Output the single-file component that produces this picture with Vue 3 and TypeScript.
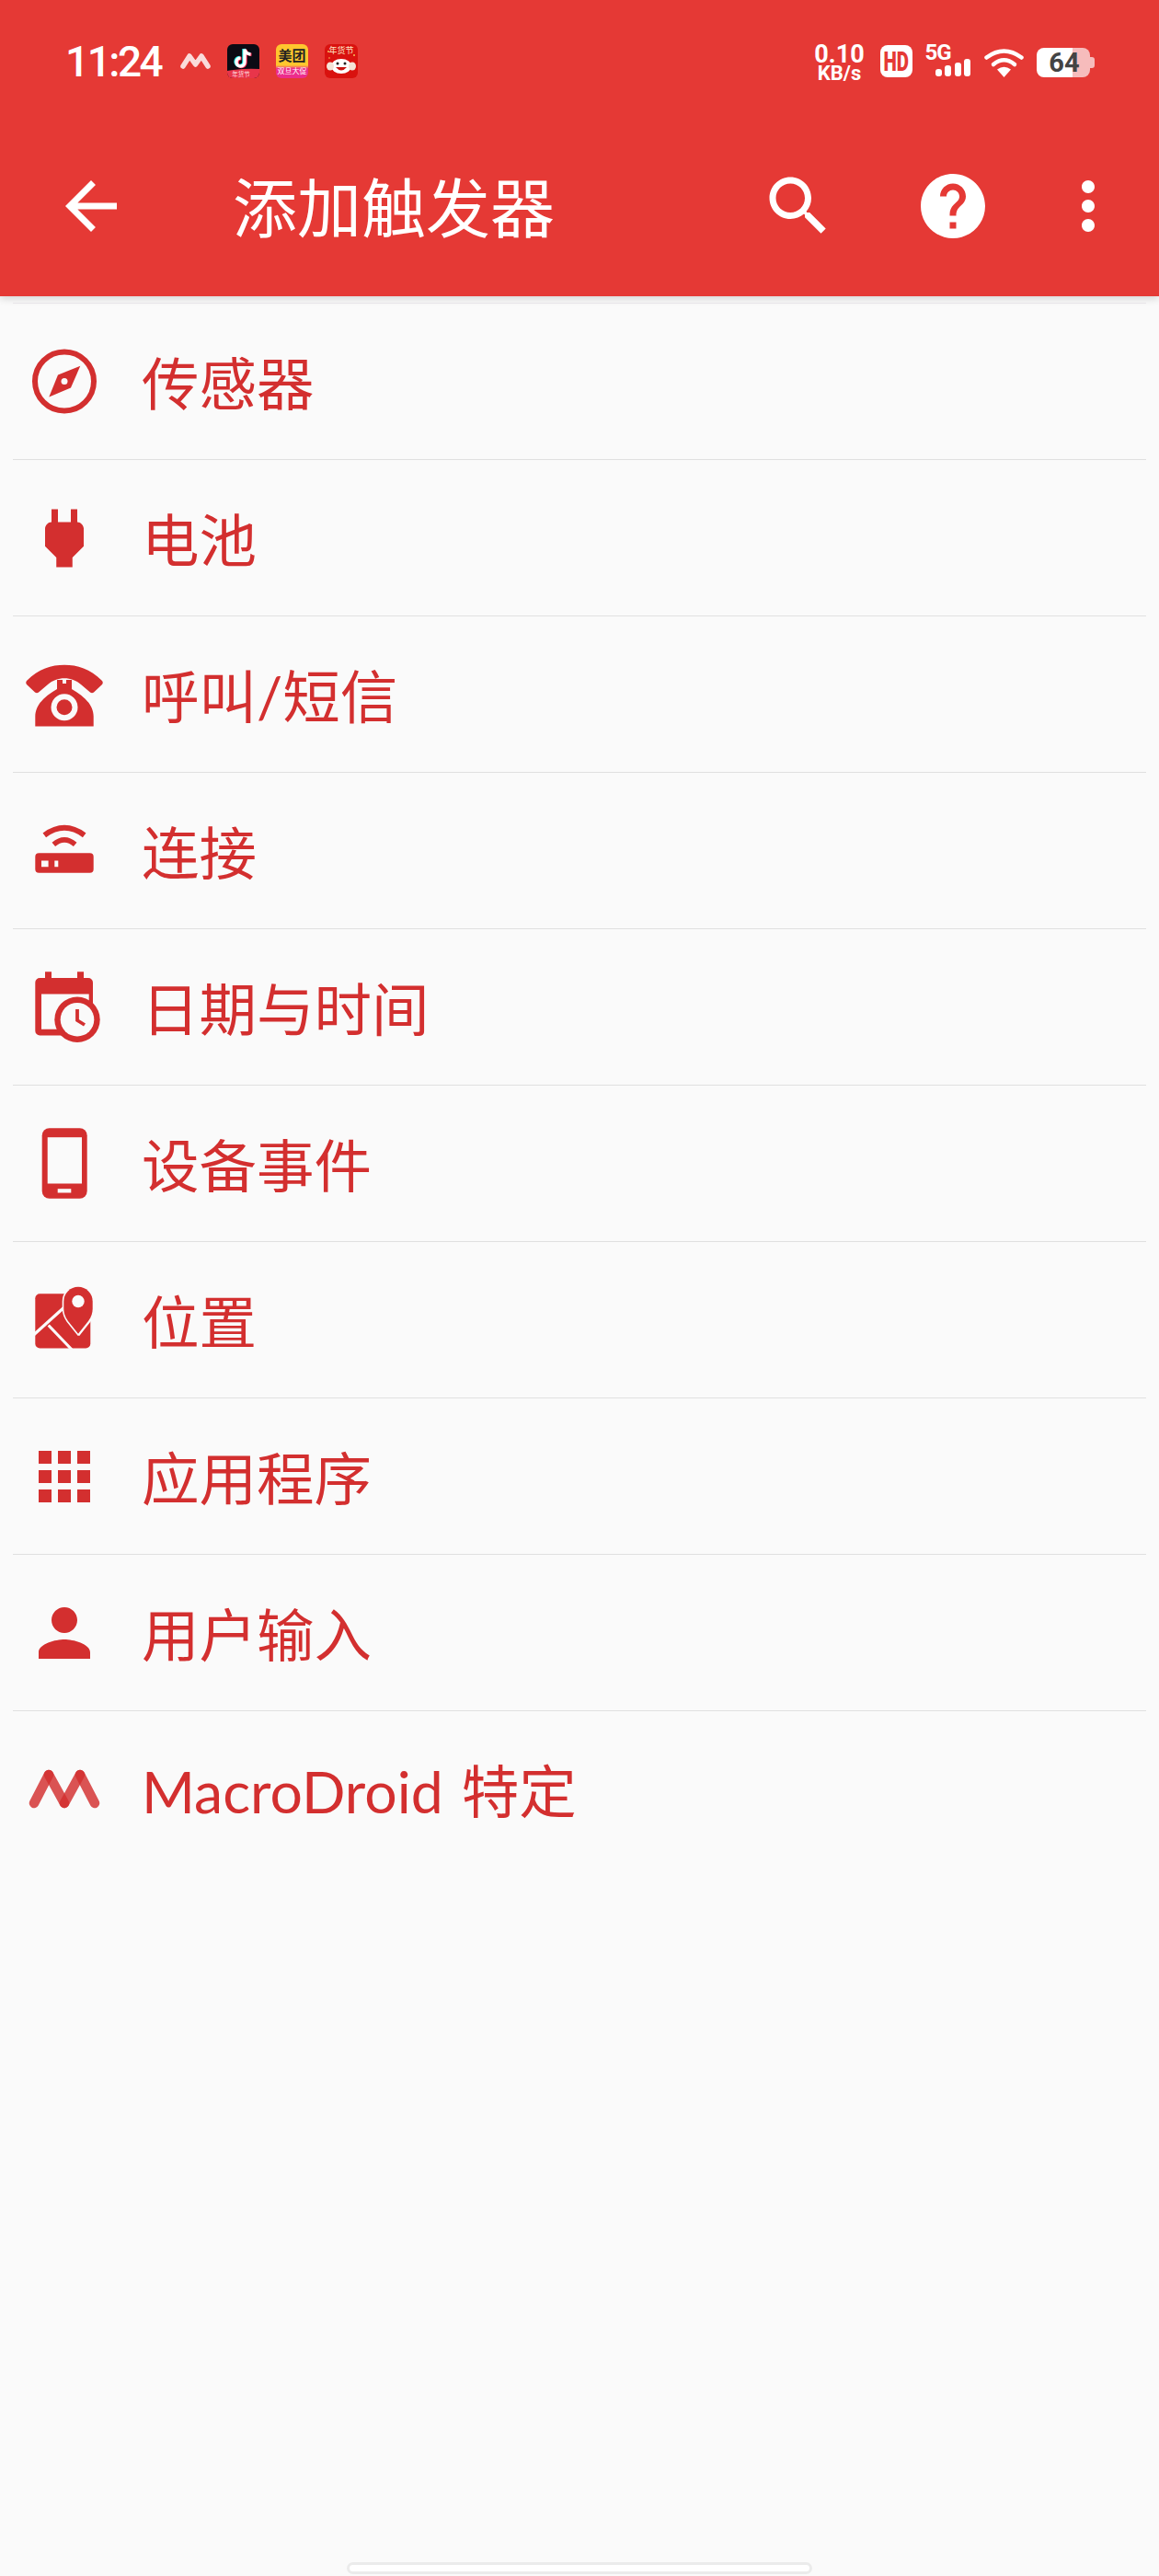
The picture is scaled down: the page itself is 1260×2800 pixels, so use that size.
<template>
  <div class="page">
    <header class="appbar">
      <!-- Status bar -->
      <div class="status">
        <span class="clock">11:24</span>
        <svg class="mini-logo" width="33" height="18" viewBox="0 0 33 18" fill="none" stroke="#fff" stroke-width="5.500" stroke-linecap="round" stroke-linejoin="round" opacity="0.82">
          <path d="M3 15L10 4l6.500 9L23 4l7 11"/>
        </svg>
        <svg class="app" width="35" height="37" viewBox="0 0 35 37">
          <rect width="35" height="37" rx="6" fill="#0b0b14"/>
          <path d="M0 29q17-3 35-2v4a6 6 0 0 1-6 6H6a6 6 0 0 1-6-6z" fill="#e8354a"/>
          <g fill="none" stroke-width="3.400">
            <path d="M18 5v14a4.500 4.500 0 1 1-4.500-4.500M18 5q1 5 6.500 5.500" stroke="#25f4ee"/>
            <path d="M20 6v14a4.500 4.500 0 1 1-4.500-4.500M20 6q1 5 6.500 5.500" stroke="#fe2c55"/>
            <path d="M19 5.500v14a4.500 4.500 0 1 1-4.500-4.500M19 5.500q1 5 6.500 5.500" stroke="#fff"/>
          </g>
          <text x="15" y="35" font-size="6.500" fill="#ffd9dd" text-anchor="middle">年货节</text>
        </svg>
        <div class="app meituan">
          <span class="mt-name">美团</span>
          <span class="mt-sub">双旦大促</span>
        </div>
        <svg class="app" width="36" height="37" viewBox="0 0 36 37">
          <rect width="36" height="37" rx="6" fill="#d9120f"/>
          <text x="18" y="10" font-size="9" fill="#ffe9c9" text-anchor="middle">年货节</text>
          <ellipse cx="18" cy="24" rx="11" ry="8" fill="#fff"/>
          <ellipse cx="6" cy="24" rx="4" ry="4.500" fill="#f4e3d7"/>
          <ellipse cx="30" cy="24" rx="4" ry="4.500" fill="#f4e3d7"/>
          <circle cx="14" cy="21" r="1.500" fill="#222"/>
          <circle cx="22" cy="21" r="1.500" fill="#222"/>
          <path d="M12 25q6 7 12 0z" fill="#c9120f"/>
          <circle cx="4" cy="8" r="1" fill="#f6c35a"/>
          <circle cx="32" cy="12" r="1" fill="#f6c35a"/>
          <circle cx="5" cy="15" r="0.800" fill="#f6c35a"/>
        </svg>

        <div class="status-right">
          <div class="speed">
            <span class="speed-num">0.10</span>
            <span class="speed-unit">KB/s</span>
          </div>
          <span class="hd"><span class="hd-text">HD</span></span>
          <div class="signal">
            <span class="five-g">5G</span>
            <i class="bar" v-for="h in signalBars" :key="h" :style="{ height: h + 'px' }"></i>
          </div>
          <svg class="wifi" width="43" height="31" viewBox="0 0 43 31" fill="none" stroke="#fff" stroke-width="4.500" stroke-linecap="round">
            <path d="M2.500 9.500Q21.500-4.500 40.500 9.500"/>
            <path d="M10 17Q21.500 7.500 33 17"/>
            <path d="M21.500 31L14 22.500Q21.500 17 29 22.500z" fill="#fff" stroke="none"/>
          </svg>
          <div class="battery">
            <div class="battery-body">64</div>
            <div class="battery-nub"></div>
          </div>
        </div>
      </div>

      <!-- Toolbar -->
      <div class="toolbar">
        <button class="tool back" aria-label="返回">
          <svg class="tool-icon" viewBox="0 0 24 24"><path d="M20 11H7.830l5.590-5.590L12 4l-8 8 8 8 1.410-1.410L7.830 13H20v-2z"/></svg>
        </button>
        <h1 class="title">添加触发器</h1>
        <button class="tool" aria-label="搜索">
          <svg class="tool-icon" viewBox="0 0 24 24"><path d="M15.500 14h-.790l-.280-.270C15.410 12.590 16 11.110 16 9.500 16 5.910 13.090 3 9.500 3S3 5.910 3 9.500 5.910 16 9.500 16c1.610 0 3.090-.590 4.230-1.570l.270.280v.790l5 4.990L20.490 19l-4.990-5zm-6 0C7.010 14 5 11.990 5 9.500S7.010 5 9.500 5 14 7.010 14 9.500 11.990 14 9.500 14z"/></svg>
        </button>
        <button class="tool" aria-label="帮助">
          <svg class="tool-icon" viewBox="0 0 24 24"><path d="M12 2C6.480 2 2 6.480 2 12s4.480 10 10 10 10-4.480 10-10S17.520 2 12 2zm1 17h-2v-2h2v2zm2.070-7.750l-.9.920C13.450 12.900 13 13.500 13 15h-2v-.5c0-1.100.45-2.100 1.170-2.830l1.240-1.260c.37-.36.590-.86.590-1.410 0-1.100-.9-2-2-2s-2 .9-2 2H8c0-2.210 1.790-4 4-4s4 1.790 4 4c0 .88-.36 1.680-.93 2.250z"/></svg>
        </button>
        <button class="tool more" aria-label="更多">
          <svg class="tool-icon" viewBox="0 0 24 24"><path d="M12 8c1.100 0 2-.9 2-2s-.9-2-2-2-2 .9-2 2 .9 2 2 2zm0 2c-1.100 0-2 .9-2 2s.9 2 2 2 2-.9 2-2-.9-2-2-2zm0 6c-1.100 0-2 .9-2 2s.9 2 2 2 2-.9 2-2-.9-2-2-2z"/></svg>
        </button>
      </div>
    </header>

    <!-- Trigger categories -->
    <ul class="list">
      <li v-for="row in rows" :key="row.label" class="row">
        <svg v-if="row.path" class="row-icon" viewBox="0 0 24 24"><path :d="row.path"/></svg>

        <svg v-else-if="row.icon === 'compass'" class="row-icon" viewBox="0 0 84 84">
          <circle cx="42" cy="41.500" r="32" fill="none" stroke="#d32f2f" stroke-width="6"/>
          <path d="M59.300 24.800L49 48.500 25.300 58.500 35 34.500z"/>
          <circle cx="42" cy="41.500" r="3.500" fill="#fafafa"/>
        </svg>

        <svg v-else-if="row.icon === 'phone'" class="row-icon" viewBox="0 0 84 84">
          <path d="M1 27C14 14 28 9.800 42 9.800S70 14 83 27q1.500 2 0 4l-9 8.500q-2 1.500-4 0L60 31C50 22 34 22 24 31l-10 8.500q-2 1.500-4 0L1 31q-1.500-2 0-4z"/>
          <path d="M10.300 76.500V66C10.300 52 22 43 34 36V26h6v4h4v-4h6v10c12 7 23.700 16 23.700 30v10.500z"/>
          <circle cx="42" cy="55.800" r="11.500" fill="none" stroke="#fafafa" stroke-width="6"/>
        </svg>

        <svg v-else-if="row.icon === 'router'" class="row-icon" viewBox="0 0 84 84">
          <path d="M14.300 44.200h55.400a4 4 0 0 1 4 4v13.600a4 4 0 0 1-4 4H14.300a4 4 0 0 1-4-4V48.200a4 4 0 0 1 4-4zM17 52.500v6.700h7.600v-6.700zm14.300 0v6.700h4v-6.700z" fill-rule="evenodd"/>
          <path d="M20.300 24.800Q42 8.800 63.700 24.800" fill="none" stroke="#d32f2f" stroke-width="6"/>
          <path d="M30.300 34.800Q42 24.800 53.700 34.800" fill="none" stroke="#d32f2f" stroke-width="5.500"/>
        </svg>

        <svg v-else-if="row.icon === 'calendar'" class="row-icon" viewBox="0 0 84 84">
          <path d="M21 3.200h7V10h28V3.200h7V10h5a5 5 0 0 1 5 5v52.500a5 5 0 0 1-5 5H15.300a5 5 0 0 1-5-5V15a5 5 0 0 1 5-5H21zM17 27.500v38.300h51.700V27.500z" fill-rule="evenodd"/>
          <circle cx="56" cy="55.200" r="24.700"/>
          <circle cx="56" cy="55.200" r="18.300" fill="#fafafa"/>
          <path d="M56 44v12l8 5" fill="none" stroke="#d32f2f" stroke-width="3.800"/>
        </svg>

        <svg v-else-if="row.icon === 'device'" class="row-icon" viewBox="0 0 84 84">
          <rect x="17.700" y="3.200" width="49" height="76.600" rx="8"/>
          <rect x="23.700" y="13.200" width="37.300" height="50.300" fill="#fafafa"/>
          <rect x="34.700" y="69.200" width="14.600" height="4.300" fill="#fafafa"/>
        </svg>

        <svg v-else-if="row.icon === 'map'" class="row-icon" viewBox="0 0 84 84">
          <rect x="10.300" y="13.200" width="60" height="59.300" rx="5"/>
          <path d="M8 58.500L44 26M24.700 47.500L51 75M57 58L72 39" fill="none" stroke="#fafafa" stroke-width="3.200"/>
          <path d="M57 56.800L46 43C42.500 38 41.300 34 41.300 29.500V21.500a15.700 15.700 0 0 1 31.400 0v8c0 4.500-1.200 8.500-4.700 13.500z" stroke="#fafafa" stroke-width="3.200" paint-order="stroke"/>
          <circle cx="57" cy="21.500" r="6.700" fill="#fafafa"/>
        </svg>

        <svg v-else-if="row.icon === 'macro'" class="row-icon" viewBox="0 0 84 84" fill="none" stroke="#d32f2f" stroke-width="10.500" stroke-linecap="round">
          <path opacity="0.82" d="M9 57l16-31"/>
          <path opacity="0.82" d="M25 26l17 31"/>
          <path opacity="0.82" d="M42 57l17-31"/>
          <path opacity="0.82" d="M59 26l16 31"/>
        </svg>

        <span class="label">{{ row.label }}</span>
      </li>
    </ul>

    <div class="home-bar"></div>
  </div>
</template>

<script setup lang="ts">
interface Row {
  label: string
  icon?: string
  path?: string
}

const signalBars = [8, 12, 15, 19]

const rows: Row[] = [
  { label: '传感器', icon: 'compass' },
  {
    label: '电池',
    path: 'M16.010 7L16 3h-2v4h-4V3H8v4h-.01C7 6.990 6 7.990 6 8.990v5.490L9.500 18v3h5v-3l3.500-3.510v-5.500c0-1-1-2-1.990-1.990z',
  },
  { label: '呼叫/短信', icon: 'phone' },
  { label: '连接', icon: 'router' },
  { label: '日期与时间', icon: 'calendar' },
  { label: '设备事件', icon: 'device' },
  { label: '位置', icon: 'map' },
  {
    label: '应用程序',
    path: 'M4 8h4V4H4v4zm6 12h4v-4h-4v4zm-6 0h4v-4H4v4zm0-6h4v-4H4v4zm6 0h4v-4h-4v4zm6-10v4h4V4h-4zm-6 4h4V4h-4v4zm6 6h4v-4h-4v4zm0 6h4v-4h-4v4z',
  },
  {
    label: '用户输入',
    path: 'M12 12c2.210 0 4-1.790 4-4s-1.790-4-4-4-4 1.790-4 4 1.790 4 4 4zm0 2c-2.670 0-8 1.340-8 4v2h16v-2c0-2.660-5.330-4-8-4z',
  },
  { label: 'MacroDroid 特定', icon: 'macro' },
]
</script>

<style scoped>
.page {
  display: flex;
  flex-direction: column;
  min-height: 2800px;
  background: #fafafa;
  font-family: "Noto Sans", "Noto Sans CJK SC", sans-serif;
}

.appbar {
  height: 322px;
  background: #e53935;
  color: #fff;
  box-shadow: 0 3px 8px rgba(0, 0, 0, 0.14);
}

.status {
  display: flex;
  align-items: flex-start;
  height: 140px;
  padding: 48px 70px 0 71px;
  box-sizing: border-box;
  font-family: Roboto, "Noto Sans CJK SC", sans-serif;
}

.clock {
  width: 125px;
  font-size: 46px;
  line-height: 39px;
  font-weight: 500;
  letter-spacing: -2.500px;
}

.mini-logo {
  margin-top: 9px;
  margin-right: 18px;
}

.app {
  display: block;
  flex: none;
  margin-right: 18px;
}

.meituan {
  display: flex;
  flex-direction: column;
  align-items: center;
  width: 35px;
  height: 37px;
  overflow: hidden;
  border-radius: 6px;
  background: linear-gradient(#ffc62e 0 62%, #ec2d8c 72%);
  font-family: "Noto Sans CJK SC", sans-serif;
}

.mt-name {
  font-size: 15px;
  line-height: 23px;
  font-weight: 700;
  color: #222;
}

.mt-sub {
  font-size: 8px;
  line-height: 12px;
  color: #fff;
  white-space: nowrap;
}

.status-right {
  display: flex;
  align-items: flex-start;
  margin-left: auto;
}

.speed {
  display: flex;
  flex-direction: column;
  align-items: center;
  width: 54px;
  font-weight: 700;
}

.speed-num {
  font-size: 27px;
  line-height: 23px;
}

.speed-unit {
  font-size: 22px;
  line-height: 17px;
}

.hd {
  display: flex;
  align-items: center;
  justify-content: center;
  width: 35px;
  height: 35px;
  margin: 1px 0 0 17px;
  border-radius: 8px;
  background: #fff;
  color: #e53935;
}

.hd-text {
  font-size: 30px;
  line-height: 30px;
  font-weight: 900;
  transform: scaleX(0.68);
}

.signal {
  position: relative;
  display: flex;
  align-items: flex-end;
  gap: 3.500px;
  height: 35px;
  margin-left: 14px;
  padding-left: 11px;
}

.five-g {
  position: absolute;
  top: 0;
  left: 0;
  font-size: 24px;
  line-height: 19px;
  font-weight: 700;
  letter-spacing: -1px;
}

.bar {
  display: block;
  width: 7px;
  border-radius: 3px;
  background: #fff;
}

.wifi {
  margin: 5px 0 0 15px;
}

.battery {
  display: flex;
  align-items: center;
  margin: 4px 0 0 14px;
}

.battery-body {
  width: 58px;
  height: 32px;
  border-radius: 8px;
  background: linear-gradient(90deg, #fff 0 67%, #f6bcbc 67%);
  color: #444;
  font-size: 29px;
  line-height: 33px;
  font-weight: 700;
  text-align: center;
  text-indent: 2px;
}

.battery-nub {
  width: 5px;
  height: 12px;
  border-radius: 0 3px 3px 0;
  background: #f6bcbc;
}

.toolbar {
  display: flex;
  align-items: center;
  height: 168px;
  padding: 0 14px 0 15px;
}

.tool {
  display: flex;
  align-items: center;
  justify-content: center;
  flex: none;
  width: 168px;
  height: 168px;
  padding: 0;
  border: 0;
  background: none;
}

.tool.more {
  width: 126px;
}

.tool-icon {
  width: 84px;
  height: 84px;
  fill: #fff;
}

.title {
  flex: 1;
  margin: 0 0 0 70px;
  padding-bottom: 3px;
  font-family: "Noto Sans CJK SC", sans-serif;
  font-size: 70px;
  line-height: 165px;
  font-weight: 400;
}

.list {
  margin: 7px 14px 0;
  padding: 0;
  border-top: 1px solid #e6e4e8;
  list-style: none;
}

.row {
  display: flex;
  align-items: center;
  gap: 42px;
  height: 170px;
  padding-left: 14px;
  box-sizing: border-box;
  border-bottom: 1px solid #e0e0e0;
}

.row:last-child {
  border-bottom: 0;
}

.row-icon {
  flex: none;
  width: 84px;
  height: 84px;
  fill: #d32f2f;
}

.label {
  padding-top: 4px;
  color: #d32f2f;
  font-family: Lato, "Noto Sans CJK SC", sans-serif;
  font-size: 62.500px;
  line-height: 80px;
  word-spacing: 4px;
}

.home-bar {
  width: 500px;
  height: 7px;
  margin: auto auto 2px;
  border: 3px solid #ebebeb;
  border-radius: 8px;
  background: #fff;
}
</style>
